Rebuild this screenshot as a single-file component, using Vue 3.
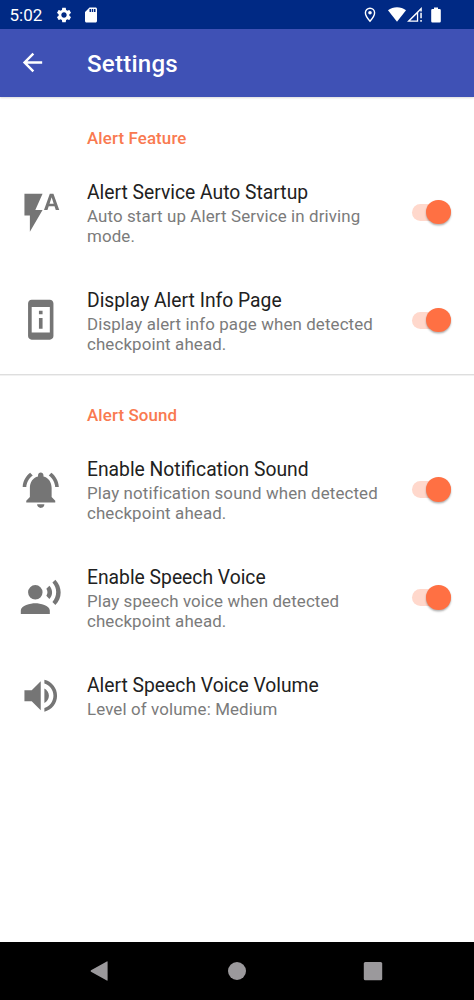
<script setup>
import { ref } from 'vue'

const paths = {
  flash: 'M3 2v12h3v9l7-12H9l4-9H3zm16 0h-2l-3.2 9h1.9l.7-2h3.2l.7 2h1.9L19 2zm-2.15 5.65L18 4l1.15 3.65h-2.3z',
  device: 'M13 7h-2v2h2V7zm0 4h-2v6h2v-6zm4-9.99L7 1c-1.1 0-2 .9-2 2v18c0 1.1.9 2 2 2h10c1.1 0 2-.9 2-2V3c0-1.1-.9-1.99-2-1.99zM17 19H7V5h10v14z',
  bell: 'M7.58 4.08L6.15 2.65C3.75 4.48 2.17 7.3 2.03 10.5h2c.15-2.65 1.51-4.97 3.55-6.42zm12.39 6.42h2c-.15-3.2-1.73-6.02-4.12-7.85l-1.42 1.43c2.02 1.45 3.39 3.77 3.54 6.42zM18 11c0-3.07-1.64-5.64-4.5-6.32V4c0-.83-.67-1.5-1.5-1.5s-1.5.67-1.5 1.5v.68C7.63 5.36 6 7.92 6 11v5l-2 2v1h16v-1l-2-2v-5zm-6 11c.14 0 .27-.01.4-.04.65-.14 1.18-.58 1.44-1.18.1-.24.15-.5.15-.78h-4c.01 1.1.9 2 2.01 2z',
  speech: 'M13 9a4 4 0 1 1-8 0a4 4 0 0 1 8 0zM9 15c-2.67 0-8 1.34-8 4v2h16v-2c0-2.66-5.33-4-8-4zm7.76-9.64l-1.68 1.69c.84 1.18.84 2.71 0 3.89l1.68 1.69c2.02-2.02 2.02-5.07 0-7.27zM20.07 2l-1.63 1.63c2.77 3.02 2.77 7.56 0 10.74L20.07 16c3.9-3.89 3.91-9.95 0-14z',
  volume: 'M3 9v6h4l5 5V4L7 9H3zm13.5 3c0-1.77-1.02-3.29-2.5-4.03v8.05c1.48-.73 2.5-2.25 2.5-4.02zM14 3.23v2.06c2.89.86 5 3.54 5 6.71s-2.11 5.85-5 6.71v2.06c4.01-.91 7-4.49 7-8.77s-2.99-7.86-7-8.77z',
}

const sections = ref([
  {
    title: 'Alert Feature',
    items: [
      { icon: 'flash', title: 'Alert Service Auto Startup', lines: ['Auto start up Alert Service in driving', 'mode.'], on: true },
      { icon: 'device', title: 'Display Alert Info Page', lines: ['Display alert info page when detected', 'checkpoint ahead.'], on: true },
    ],
  },
  {
    title: 'Alert Sound',
    items: [
      { icon: 'bell', title: 'Enable Notification Sound', lines: ['Play notification sound when detected', 'checkpoint ahead.'], on: true },
      { icon: 'speech', title: 'Enable Speech Voice', lines: ['Play speech voice when detected', 'checkpoint ahead.'], on: true },
      { icon: 'volume', title: 'Alert Speech Voice Volume', lines: ['Level of volume: Medium'] },
    ],
  },
])
</script>

<template>
  <div class="screen">
    <div class="status">
      <span class="clock">5:02</span>
      <svg class="gear" viewBox="0 0 24 24"><path d="M19.14 12.94c.04-.3.06-.61.06-.94 0-.32-.02-.64-.07-.94l2.03-1.58c.18-.14.23-.41.12-.61l-1.92-3.32c-.12-.22-.37-.29-.59-.22l-2.39.96c-.5-.38-1.03-.7-1.62-.94l-.36-2.54c-.04-.24-.24-.41-.48-.41h-3.84c-.24 0-.43.17-.47.41l-.36 2.54c-.59.24-1.13.57-1.62.94l-2.39-.96c-.22-.08-.47 0-.59.22L2.74 8.87c-.12.21-.08.47.12.61l2.03 1.58c-.05.3-.09.63-.09.94s.02.64.07.94l-2.03 1.58c-.18.14-.23.41-.12.61l1.92 3.32c.12.22.37.29.59.22l2.39-.96c.5.38 1.03.7 1.62.94l.36 2.54c.05.24.24.41.48.41h3.84c.24 0 .44-.17.47-.41l.36-2.54c.59-.24 1.13-.56 1.62-.94l2.39.96c.22.08.47 0 .59-.22l1.92-3.32c.12-.22.07-.47-.12-.61l-2.01-1.58zM12 15.6c-1.98 0-3.6-1.62-3.6-3.6s1.62-3.6 3.6-3.6 3.6 1.62 3.6 3.6-1.62 3.6-3.6 3.6z" /></svg>
      <svg class="sd" viewBox="0 0 24 24"><path d="M18 2h-8L4.02 8 4 20c0 1.1.9 2 2 2h12c1.1 0 2-.9 2-2V4c0-1.1-.9-2-2-2zm-6 6h-2V4h2v4zm3 0h-2V4h2v4zm3 0h-2V4h2v4z" /></svg>
      <span class="grow"></span>
      <svg class="pin" viewBox="0 0 12 16"><path d="M6 1.2a4.6 4.6 0 0 0-4.6 4.6C1.4 9.2 6 14.3 6 14.3s4.6-5.1 4.6-8.5A4.6 4.6 0 0 0 6 1.2z" fill="none" stroke="#fff" stroke-width="1.4" /><circle cx="6" cy="5.7" r="1.8" /></svg>
      <svg class="wifi" viewBox="0 0 18 15"><path d="M0 3.2C5-.9 13-.9 18 3.2L9 14.7z" /></svg>
      <svg class="signal" viewBox="0 0 16 15"><path d="M0 14.8L14.8 0v4.6h-1.5V3.3L11.2 5.8V14.8zM3.3 13.4h6.6V6.9z" fill-rule="evenodd" /><path d="M13.3 5.8h1.5v5.4h-1.5zM13.3 12.9h1.5v1.9h-1.5z" /></svg>
      <svg class="battery" viewBox="0 0 10 16"><path d="M3 .4h4V2h1.6q1.2 0 1.2 1.2v11q0 1.3-1.2 1.3H1.4Q.2 15.5.2 14.2v-11Q.2 2 1.4 2H3z" /></svg>
    </div>
    <header class="bar">
      <svg class="back" viewBox="0 0 24 24"><path d="M20 11H7.83l5.59-5.59L12 4l-8 8 8 8 1.41-1.41L7.83 13H20v-2z" /></svg>
      <h1>Settings</h1>
    </header>
    <main>
      <section v-for="s in sections" :key="s.title">
        <h2>{{ s.title }}</h2>
        <div v-for="i in s.items" :key="i.title" class="row">
          <svg class="icon" viewBox="0 0 24 24"><path :d="paths[i.icon]" /></svg>
          <div class="text">
            <h3>{{ i.title }}</h3>
            <p v-for="l in i.lines" :key="l">{{ l }}</p>
          </div>
          <button v-if="i.on !== undefined" class="switch" :class="{ off: !i.on }" :aria-label="i.title" @click="i.on = !i.on"><span class="thumb"></span></button>
        </div>
      </section>
    </main>
    <nav>
      <svg viewBox="0 0 20 20"><path d="M17.6.9v18.2q0 .8-.8.4L1 10.7q-.9-.7 0-1.4L16.8.5q.8-.4.8.4z" /></svg>
      <svg viewBox="0 0 20 20"><circle cx="10" cy="10" r="9" /></svg>
      <svg viewBox="0 0 20 20"><rect x=".8" y=".9" width="18.4" height="18.4" rx="1.5" /></svg>
    </nav>
  </div>
</template>

<style>
body { margin: 0; }
</style>

<style scoped>
.screen { width: 474px; height: 1000px; display: flex; flex-direction: column; background: #fff; font-family: Roboto, sans-serif; overflow: hidden; }
h1, h2, h3, p { margin: 0; }
svg { display: block; flex: none; fill: #fff; }
.status { height: 29px; flex: none; background: #002984; display: flex; align-items: center; box-sizing: border-box; padding: 0 33.5px 0 9.5px; }
.clock { color: #fff; font-size: 17px; line-height: 29px; width: 45.5px; padding-top: 1px; }
.gear { width: 18px; height: 18px; }
.sd { width: 18px; height: 18px; margin-left: 9px; }
.grow { flex: 1; }
.pin { width: 12px; height: 16px; }
.wifi { width: 18px; height: 15px; margin-left: 12px; }
.signal { width: 16px; height: 15px; margin-left: 1.5px; }
.battery { width: 10px; height: 16px; margin-left: 7.5px; }
.bar { height: 68px; flex: none; background: #3f51b5; display: flex; align-items: center; box-shadow: 0 1px 2px rgba(0, 0, 0, .15); }
.back { width: 29px; height: 29px; margin: 0 40px 2px 18px; }
h1 { color: #fff; font-size: 24.1px; line-height: 28px; font-weight: 500; padding-top: 2px; letter-spacing: .22px; }
main { flex: 1; }
section + section { border-top: 1px solid #dedede; box-shadow: inset 0 1px 0 #f1f1f1; }
h2 { height: 61px; box-sizing: border-box; padding: 30px 0 0 87px; font-size: 16.9px; line-height: 22px; font-weight: 500; letter-spacing: .12px; color: #f97a50; }
section + section h2 { height: 60.5px; padding-top: 29px; }
.row { display: flex; align-items: center; padding: 20.5px 23.5px 20.5px 19.3px; }
.icon { width: 43.5px; height: 43.5px; fill: #757575; margin-right: 24.2px; }
.text { flex: 1; padding-top: 2px; }
h3 { font-size: 19.3px; line-height: 23px; font-weight: 400; color: #212121; white-space: nowrap; padding-bottom: 2px; }
p { font-size: 16.9px; line-height: 20px; color: #7b7b7b; letter-spacing: .12px; white-space: nowrap; }
.switch { border: 0; padding: 0; width: 38.5px; height: 17px; border-radius: 9px; background: #ffd8cc; display: flex; justify-content: flex-end; align-items: center; }
.switch.off { justify-content: flex-start; background: #ccc; }
.thumb { width: 24.5px; height: 24.5px; border-radius: 50%; background: #ff7043; box-shadow: 0 1.5px 2px rgba(0, 0, 0, .3); flex: none; }
nav { height: 58px; flex: none; background: #000; display: flex; justify-content: space-between; align-items: center; padding: 0 91px 0 90px; }
nav svg { width: 20px; height: 20px; fill: #9b999c; }
</style>
